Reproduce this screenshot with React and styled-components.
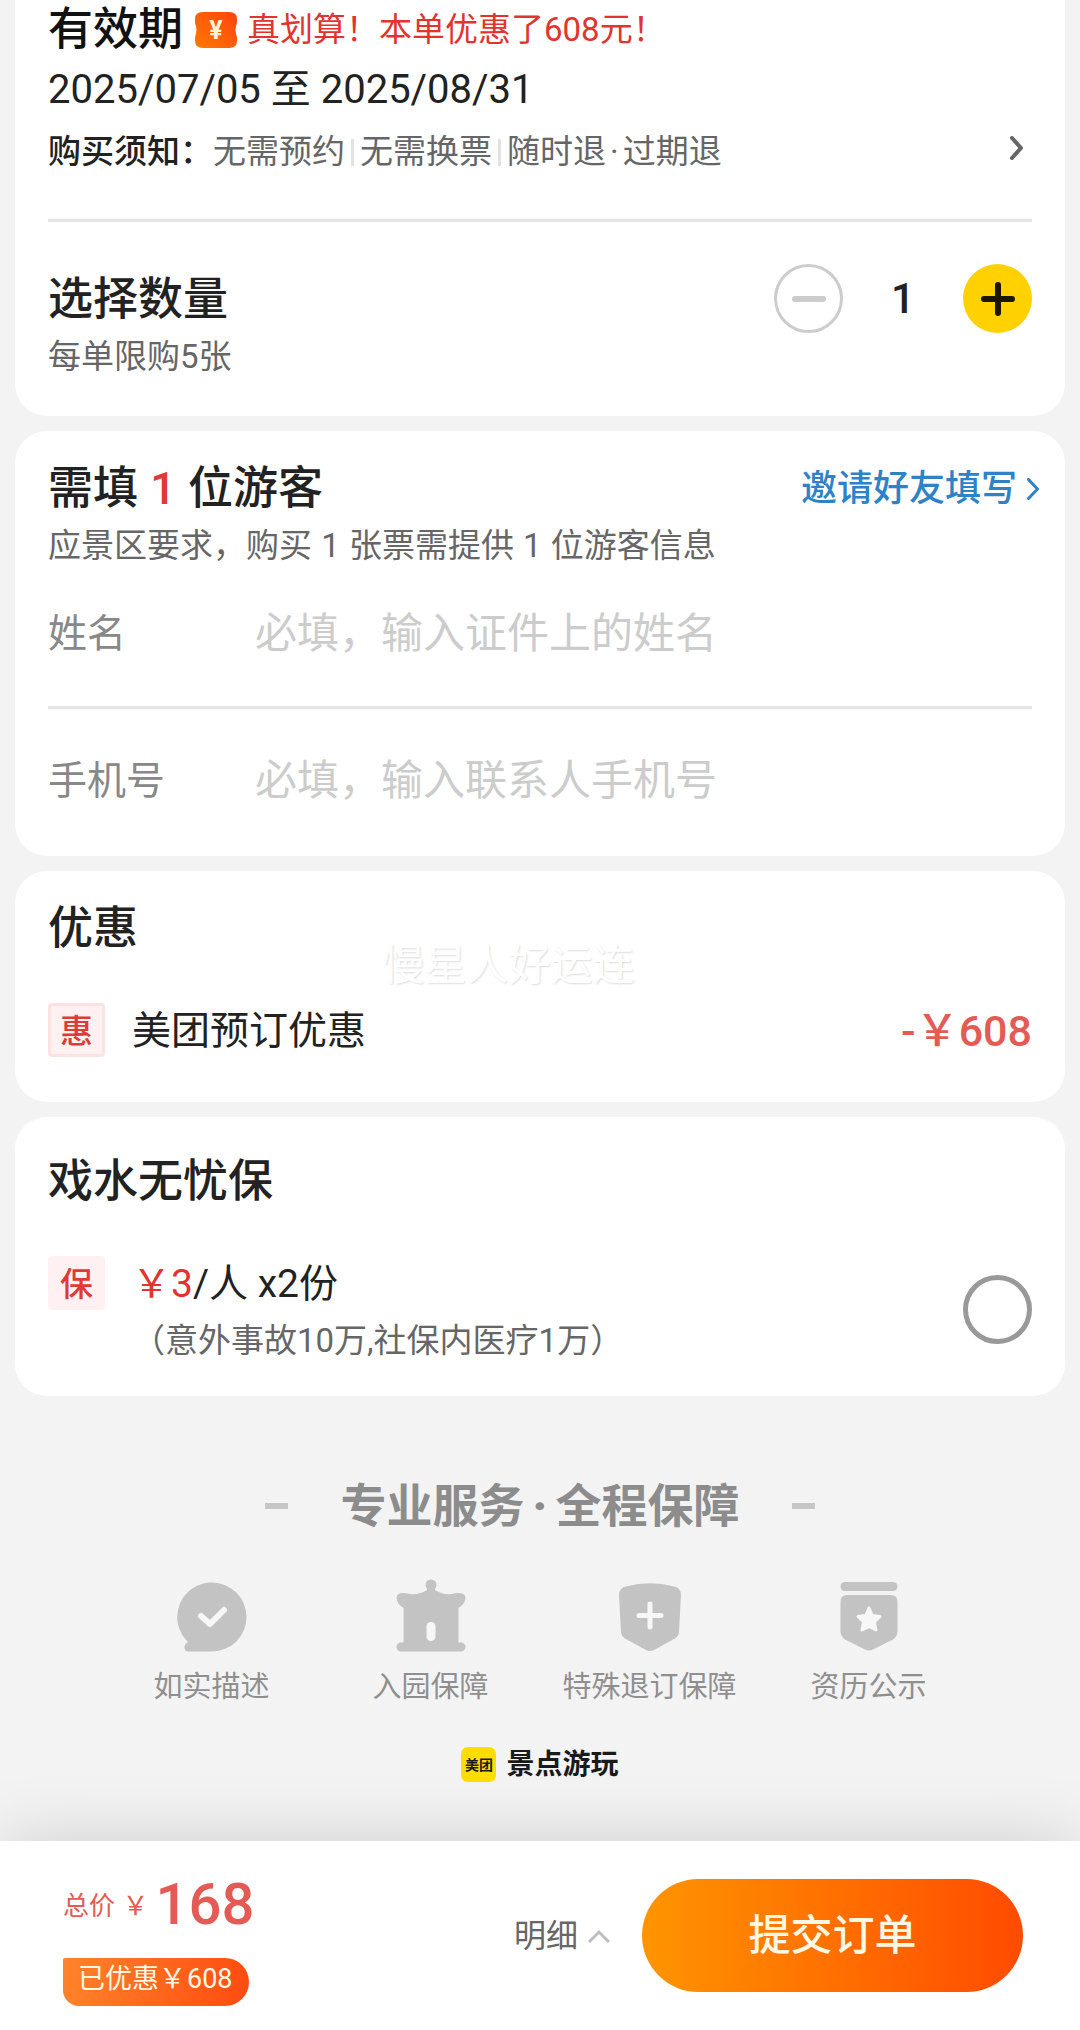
import { useState } from "react";
import styled, { createGlobalStyle } from "styled-components";

const GlobalStyle = createGlobalStyle`
  * {
    box-sizing: border-box;
  }

  body {
    margin: 0;
    background: #f3f3f3;
    color: #222;
    font-family: Roboto, "Noto Sans CJK SC", sans-serif;
  }

  button,
  input {
    font-family: inherit;
  }
`;

const Page = styled.div`
  display: flex;
  flex-direction: column;
  min-height: 100vh;
`;

const Main = styled.main`
  flex: 1;
`;

const Card = styled.section`
  position: relative;
  margin: 0 15px 15px;
  padding: ${({ $top }) => $top}px 33px ${({ $bottom }) => $bottom}px;
  background: #fff;
  border-radius: ${({ $first }) => ($first ? "0 0 32px 32px" : "32px")};
`;

const Row = styled.div`
  display: flex;
  align-items: ${({ $align }) => $align || "center"};
  justify-content: space-between;
`;

const Title = styled.h2`
  margin: 0;
  font-size: 45px;
  font-weight: 500;
  line-height: 72px;
`;

const SubText = styled.p`
  margin: 0;
  font-size: 33px;
  line-height: 42px;
  color: #666;
`;

const Count = styled.span`
  margin: 0 1px;
  color: ${({ $red }) => ($red ? "#e03a36" : "inherit")};
`;

const Dot = styled.span`
  margin: 0 ${({ $gap }) => $gap}px;
  font-weight: ${({ $heavy }) => ($heavy ? 900 : "inherit")};
`;

const Divider = styled.hr`
  height: 3px;
  margin: 42px 0;
  border: 0;
  background: #e4e4e4;
`;

/* validity */

const ValidityHead = styled.div`
  display: flex;
  align-items: center;
  height: 60px;
  color: #111;

  h2 {
    line-height: 60px;
  }

  svg {
    margin: 0 10px 0 12px;
  }
`;

const SaveTip = styled.span`
  font-size: 33px;
  line-height: 60px;
  color: #e2332f;
`;

const DateRange = styled.p`
  margin: 0 0 7px;
  font-size: 40px;
  line-height: 60px;
`;

const NoticeText = styled.p`
  display: flex;
  align-items: center;
  margin: 0;
  font-size: 33px;
  line-height: 50px;
  color: #666;

  strong {
    font-weight: 500;
    color: #222;
  }
`;

const Separator = styled.i`
  width: 3px;
  height: 27px;
  margin: 0 6px;
  background: #e2e2e2;
`;

const IconButton = styled.button`
  display: flex;
  padding: 0 8px 8px 16px;
  border: 0;
  background: none;
  cursor: pointer;
`;

/* quantity */

const Stepper = styled.div`
  display: flex;
  align-items: center;

  output {
    width: 120px;
    text-align: center;
    font-size: 42px;
    font-weight: 500;
    line-height: 60px;
  }
`;

const RoundButton = styled.button`
  display: flex;
  align-items: center;
  justify-content: center;
  width: 69px;
  height: 69px;
  padding: 0;
  border: ${({ $primary }) => ($primary ? "0" : "3px solid #ccc")};
  border-radius: 50%;
  background: ${({ $primary }) => ($primary ? "#ffd100" : "#fff")};
  color: ${({ $primary }) => ($primary ? "#1c1500" : "#ccc")};
  cursor: pointer;
`;

/* visitors */

const InviteLink = styled.a`
  display: flex;
  align-items: center;
  gap: 10px;
  margin-right: -8px;
  font-size: 36px;
  font-weight: 500;
  line-height: 60px;
  color: #2e82c8;
  text-decoration: none;
`;

const Form = styled.form`
  margin-top: 37px;
`;

const Field = styled.div`
  display: flex;
  align-items: center;
  height: 60px;
  line-height: 60px;

  label {
    flex: 0 0 207px;
    font-size: 39px;
    color: #888;
  }

  input {
    flex: 1;
    min-width: 0;
    height: 60px;
    padding: 0;
    border: 0;
    outline: 0;
    background: none;
    font-size: 42px;
    line-height: 60px;
    color: #222;
  }

  input::placeholder {
    color: #ccc;
    opacity: 1;
  }
`;

/* discount and insurance */

const Tag = styled.span`
  flex: none;
  width: 57px;
  height: 54px;
  border: 3px solid ${({ $outlined }) => ($outlined ? "#fbe3e3" : "#fff1f1")};
  border-radius: 4px;
  background: #fff1f1;
  color: #e03a36;
  font-size: 33px;
  font-weight: 500;
  line-height: 52px;
  text-align: center;
`;

const Item = styled.div`
  display: flex;
  align-items: flex-start;
  gap: 27px;
  margin-top: 38px;
  font-size: 39px;
  line-height: 56px;

  p {
    margin: 0;
  }
`;

const ItemBody = styled.label`
  flex: 1;
`;

const Amount = styled.span`
  font-size: 43px;
  font-weight: 500;
  color: #e45a54;
`;

const Price = styled.span`
  color: #e2332f;
`;

const Detail = styled.span`
  display: block;
  margin-top: 4px;
  font-size: 33px;
  line-height: 50px;
  color: #666;
`;

const RoundCheck = styled.input`
  appearance: none;
  width: 69px;
  height: 69px;
  margin: 19px 0 0;
  border: 5px solid #999;
  border-radius: 50%;

  &:checked {
    border: 20px solid #ffd100;
  }
`;

const Watermark = styled.span`
  position: absolute;
  top: 65px;
  left: 35%;
  font-size: 42px;
  line-height: 60px;
  color: #fff;
  text-shadow: 1px 1px 2px rgba(0, 0, 0, 0.14);
  pointer-events: none;
`;

/* service promises */

const Service = styled.section`
  display: flex;
  flex-direction: column;
  align-items: center;
  padding: 63px 102px 59px;
`;

const ServiceTitle = styled.h2`
  display: flex;
  align-items: center;
  gap: 53px;
  margin: 0;
  font-size: 46px;
  font-weight: 700;
  line-height: 64px;
  color: #8c8c8c;

  &::before,
  &::after {
    content: "";
    width: 23px;
    height: 6px;
    background: #c6c6c6;
  }
`;

const ServiceList = styled.ul`
  display: grid;
  grid-template-columns: repeat(4, 1fr);
  width: 100%;
  margin: 40px 0;
  padding: 0;
  list-style: none;

  li {
    display: flex;
    flex-direction: column;
    align-items: center;
    gap: 15px;
    font-size: 29px;
    line-height: 40px;
    color: #8f8f8f;
    white-space: nowrap;
  }
`;

const Brand = styled.div`
  display: flex;
  align-items: center;
  gap: 10px;
  height: 35px;
  font-size: 28px;
  font-weight: 700;
  line-height: 36px;
  color: #1a1a1a;
`;

const BrandMark = styled.span`
  width: 35px;
  height: 35px;
  border-radius: 7px;
  background: #ffdd00;
  font-size: 14px;
  text-align: center;
`;

/* bottom bar */

const Bar = styled.footer`
  position: sticky;
  bottom: 0;
  display: flex;
  align-items: center;
  height: 189px;
  padding: 0 57px 0 63px;
  background: #fff;
  box-shadow: 0 0 70px rgba(0, 0, 0, 0.15);
`;

const Total = styled.div`
  flex: 1;
  color: #e45a54;
`;

const TotalPrice = styled.div`
  display: flex;
  align-items: center;
  gap: 6px;
  height: 78px;
  font-size: 26px;
  line-height: 78px;

  > span {
    padding-top: 4px;
  }

  b {
    font-size: 58px;
    font-weight: 500;
  }
`;

const SavedPill = styled.div`
  width: max-content;
  height: 48px;
  margin-top: 15px;
  padding: 0 15px;
  border-radius: 2px 24px 24px 16px;
  background: linear-gradient(100deg, #ff842b, #ff4b10);
  color: #fff8e4;
  font-size: 27px;
  line-height: 42px;
`;

const DetailButton = styled.button`
  display: flex;
  align-items: center;
  gap: 10px;
  margin-right: 32px;
  padding: 0;
  border: 0;
  background: none;
  font-size: 32px;
  line-height: 60px;
  color: #666;
  cursor: pointer;
`;

const SubmitButton = styled.button`
  width: 381px;
  height: 113px;
  padding: 0;
  border: 0;
  border-radius: 57px;
  background: linear-gradient(90deg, #ff9500, #ff4b00);
  color: #fff8e4;
  font-size: 42px;
  font-weight: 500;
  line-height: 60px;
  cursor: pointer;
`;

function Chevron({ width, height, stroke, color }) {
  const m = stroke / 2;
  return (
    <svg width={width} height={height} fill="none" aria-hidden="true">
      <path
        d={`M${m} ${m}L${width - m - 1} ${height / 2}L${m} ${height - m}`}
        stroke={color}
        strokeWidth={stroke}
        strokeLinecap="round"
        strokeLinejoin="round"
      />
    </svg>
  );
}

function CouponIcon() {
  return (
    <svg width="42" height="36" viewBox="0 0 42 36" aria-hidden="true">
      <defs>
        <linearGradient id="coupon" x1="0" y1="1" x2="1" y2="0">
          <stop offset="0" stopColor="#ff7a00" />
          <stop offset="1" stopColor="#ff4210" />
        </linearGradient>
      </defs>
      <path
        d="M8 0H34Q42 0 42 7V10Q42 12 41 14Q40 18 41 22Q42 24 42 26V29Q42 36 34 36H8Q0 36 0 29V26Q0 24 1 22Q2 18 1 14Q0 12 0 10V7Q0 0 8 0Z"
        fill="url(#coupon)"
      />
      <text x="21" y="27" textAnchor="middle" fontSize="25" fontWeight="700" fill="#fff3d6">
        ¥
      </text>
    </svg>
  );
}

const services = [
  {
    label: "如实描述",
    icon: (
      <>
        <path
          d="M36 4.500A34.500 34.500 0 0 1 36 73.500H12.500Q8.500 73.500 8.500 69.500Q8.500 66 12 64A34.500 34.500 0 0 1 36 4.500Z"
          fill="#c3c3c3"
        />
        <path
          d="M25 38L34 46L48 32"
          fill="none"
          stroke="#f7f7f7"
          strokeWidth="6"
          strokeLinecap="round"
          strokeLinejoin="round"
        />
      </>
    ),
  },
  {
    label: "入园保障",
    icon: (
      <>
        <circle cx="36" cy="7" r="5.500" fill="#c3c3c3" />
        <path
          d="M32 9H40V12Q47 17 57 16Q70 13 70.500 20Q70 26 63.500 30V64.500H66A4.500 4.500 0 0 1 66 73.500H6A4.500 4.500 0 0 1 6 64.500H8.500V30Q2 26 1.500 20Q2 13 15 16Q25 17 32 12Z"
          fill="#c3c3c3"
        />
        <rect x="31.500" y="44" width="9" height="19" rx="4.500" fill="#f7f7f7" />
      </>
    ),
  },
  {
    label: "特殊退订保障",
    icon: (
      <>
        <path
          d="M12 8.500Q36 2 60 8.500Q67 10 67 17L65 54Q64.500 58 61 60.500L40 72Q36 74 32 72L11 60.500Q7.500 58 7 54L5 17Q5 10 12 8.500Z"
          fill="#c3c3c3"
        />
        <path d="M36 26V49M25 37.500H47" stroke="#f7f7f7" strokeWidth="5" strokeLinecap="round" />
      </>
    ),
  },
  {
    label: "资历公示",
    icon: (
      <>
        <rect x="7.500" y="4" width="57" height="9" rx="4.500" fill="#c3c3c3" />
        <path
          d="M14 17H58Q64.500 17 64.500 24V54Q64 59 60 61.500L40 71.500Q36 73.500 32 71.500L12 61.500Q8 59 7.500 54V24Q7.500 17 14 17Z"
          fill="#c3c3c3"
        />
        <path
          d="M36 30L39.200 37.500L47 38.500L41.500 44L43 52L36 48.500L29 52L30.500 44L25 38.500L32.800 37.500Z"
          fill="#f7f7f7"
          stroke="#f7f7f7"
          strokeWidth="3"
          strokeLinejoin="round"
        />
      </>
    ),
  },
];

const MAX_TICKETS = 5;

export default function App() {
  const [quantity, setQuantity] = useState(1);
  const [insured, setInsured] = useState(false);

  return (
    <Page>
      <GlobalStyle />
      <Main>
        <Card $first $top={0} $bottom={38}>
          <ValidityHead>
            <Title>有效期</Title>
            <CouponIcon />
            <SaveTip>真划算！本单优惠了608元！</SaveTip>
          </ValidityHead>
          <DateRange>2025/07/05 至 2025/08/31</DateRange>
          <Row>
            <NoticeText>
              <strong>购买须知：</strong>
              无需预约
              <Separator />
              无需换票
              <Separator />
              <span>
                随时退<Dot $gap={4}>·</Dot>过期退
              </span>
            </NoticeText>
            <IconButton type="button" aria-label="购买须知">
              <Chevron width={14} height={24} stroke={4} color="#666" />
            </IconButton>
          </Row>
          <Divider />
          <Row $align="flex-start">
            <div>
              <Title>选择数量</Title>
              <SubText>每单限购5张</SubText>
            </div>
            <Stepper>
              <RoundButton
                type="button"
                aria-label="减少"
                disabled={quantity === 1}
                onClick={() => setQuantity(quantity - 1)}
              >
                <svg width="36" height="36" aria-hidden="true">
                  <path d="M4 18H32" stroke="currentColor" strokeWidth="6" strokeLinecap="round" />
                </svg>
              </RoundButton>
              <output>{quantity}</output>
              <RoundButton
                $primary
                type="button"
                aria-label="增加"
                onClick={() => setQuantity(Math.min(MAX_TICKETS, quantity + 1))}
              >
                <svg width="36" height="36" aria-hidden="true">
                  <path
                    d="M4 18H32M18 4V32"
                    stroke="currentColor"
                    strokeWidth="6"
                    strokeLinecap="round"
                  />
                </svg>
              </RoundButton>
            </Stepper>
          </Row>
        </Card>

        <Card $top={22} $bottom={45}>
          <Row>
            <Title>
              需填 <Count $red>{quantity}</Count> 位游客
            </Title>
            <InviteLink href="#invite">
              邀请好友填写
              <Chevron width={13} height={22} stroke={3} color="#2e82c8" />
            </InviteLink>
          </Row>
          <SubText>
            应景区要求，购买 <Count>{quantity}</Count> 张票需提供 <Count>{quantity}</Count>{" "}
            位游客信息
          </SubText>
          <Form>
            <Field>
              <label htmlFor="name">姓名</label>
              <input id="name" type="text" placeholder="必填，输入证件上的姓名" />
            </Field>
            <Divider />
            <Field>
              <label htmlFor="phone">手机号</label>
              <input id="phone" type="tel" placeholder="必填，输入联系人手机号" />
            </Field>
          </Form>
        </Card>

        <Card $top={22} $bottom={43}>
          <Title>优惠</Title>
          <Item>
            <Tag $outlined>惠</Tag>
            <ItemBody as="p">美团预订优惠</ItemBody>
            <Amount>-￥608</Amount>
          </Item>
          <Watermark>慢星人好运连</Watermark>
        </Card>

        <Card $top={29} $bottom={30}>
          <Title>戏水无忧保</Title>
          <Item>
            <Tag>保</Tag>
            <ItemBody htmlFor="insurance">
              <Price>￥3</Price>/人 x2份
              <Detail>（意外事故10万,社保内医疗1万）</Detail>
            </ItemBody>
            <RoundCheck
              id="insurance"
              type="checkbox"
              checked={insured}
              onChange={(e) => setInsured(e.target.checked)}
            />
          </Item>
        </Card>

        <Service>
          <ServiceTitle>
            <span>
              专业服务
              <Dot $gap={8} $heavy>
                ·
              </Dot>
              全程保障
            </span>
          </ServiceTitle>
          <ServiceList>
            {services.map((service) => (
              <li key={service.label}>
                <svg width="72" height="74" aria-hidden="true">
                  {service.icon}
                </svg>
                {service.label}
              </li>
            ))}
          </ServiceList>
          <Brand>
            <BrandMark>美团</BrandMark>
            景点游玩
          </Brand>
        </Service>
      </Main>

      <Bar>
        <Total>
          <TotalPrice>
            <span>
              总价 <Count>￥</Count>
            </span>
            <b>168</b>
          </TotalPrice>
          <SavedPill>
            已优惠￥<Count>608</Count>
          </SavedPill>
        </Total>
        <DetailButton type="button">
          明细
          <svg width="22" height="14" fill="none" aria-hidden="true">
            <path d="M1 13L11 3L21 13" stroke="#bdbdc2" strokeWidth="3" />
          </svg>
        </DetailButton>
        <SubmitButton type="button">提交订单</SubmitButton>
      </Bar>
    </Page>
  );
}
